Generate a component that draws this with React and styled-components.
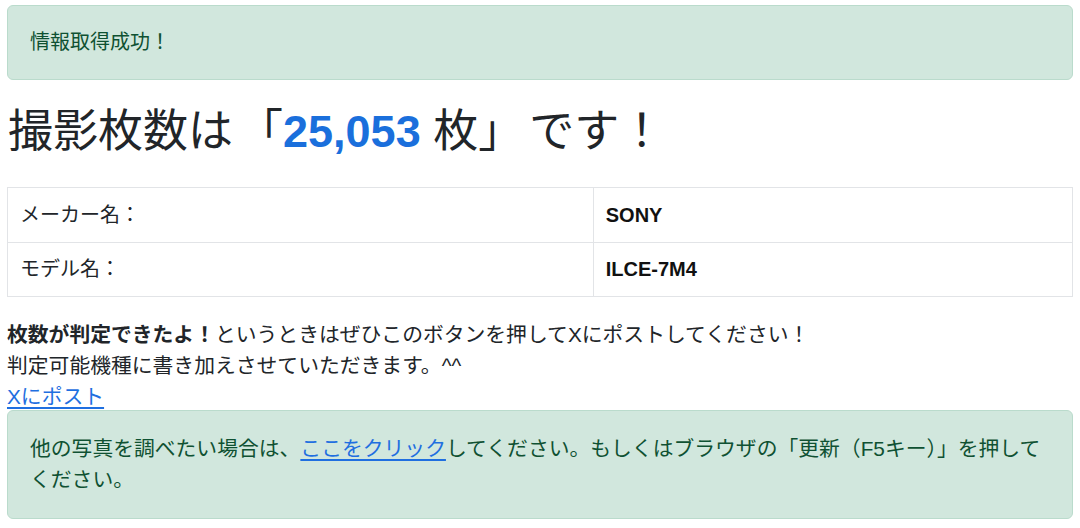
import React from "react";
import styled, { createGlobalStyle } from "styled-components";

const Global = createGlobalStyle`
  html, body { margin: 0; padding: 0; background: #fff; }
  body {
    font-family: "Liberation Sans", "Noto Sans CJK JP", sans-serif;
    font-size: 20px;
    line-height: 31px;
    color: #212529;
  }
  * { box-sizing: border-box; }
`;

const Page = styled.div`
  padding: 5px 7px 0 7px;
  display: flex;
  flex-direction: column;
`;

const Alert = styled.div`
  background: #d1e7dd;
  border: 1px solid #badbcc;
  border-radius: 6px;
  color: #0f5132;
  font-size: ${(p) => p.$size || "20px"};
  padding: ${(p) => p.$pad || "21px 22px"};
  margin-top: ${(p) => p.$mt || "0"};
`;

const Heading = styled.h1`
  margin: 25px 0 0 1px;
  font-size: 45px;
  line-height: 54px;
  font-weight: 400;
`;

const Bracket = styled.span`
  margin-left: ${(p) => p.$ml || "0"};
  margin-right: ${(p) => p.$mr || "0"};
`;

const Count = styled.span`
  color: #1a6fdc;
  font-weight: 700;
`;

const Table = styled.table`
  width: 100%;
  border-collapse: collapse;
  margin-top: 28px;
  border: 1px solid #e2e4e7;
`;

const Cell = styled.td`
  border: 1px solid #e2e4e7;
  padding: 11px 12px;
  height: ${(p) => p.$h || "auto"};
  width: ${(p) => p.$w || "auto"};
  font-weight: ${(p) => (p.$bold ? 700 : 400)};
  color: ${(p) => (p.$bold ? "#111" : "#212529")};
  vertical-align: middle;
`;

const Para = styled.p`
  margin: 22px 0 0 0;
  font-size: 20.8px;
`;

const Link = styled.a`
  color: #1f6fe0;
  text-decoration: underline;
  text-underline-offset: 3px;
`;

export default function App() {
  return (
    <>
      <Global />
      <Page>
        <Alert>情報取得成功！</Alert>
        <Heading>
          撮影枚数は<Bracket $ml="5px">「</Bracket>
          <Count>25,053</Count> 枚<Bracket $mr="6px">」</Bracket>です！
        </Heading>
        <Table>
          <tbody>
            <tr>
              <Cell $w="55%" $h="55px">メーカー名：</Cell>
              <Cell $bold>SONY</Cell>
            </tr>
            <tr>
              <Cell $w="55%">モデル名：</Cell>
              <Cell $bold>ILCE-7M4</Cell>
            </tr>
          </tbody>
        </Table>
        <Para>
          <b>枚数が判定できたよ！</b>というときはぜひこのボタンを押してXにポストしてください！
          <br />
          判定可能機種に書き加えさせていただきます。^^
          <br />
          <Link href="#">Xにポスト</Link>
        </Para>
        <Alert $size="20.8px" $pad="22px 22px 23px" $mt="-2px">
          他の写真を調べたい場合は、<Link href="#">ここをクリック</Link>してください。もしくはブラウザの「更新（F5キー）」を押してください。
        </Alert>
      </Page>
    </>
  );
}
